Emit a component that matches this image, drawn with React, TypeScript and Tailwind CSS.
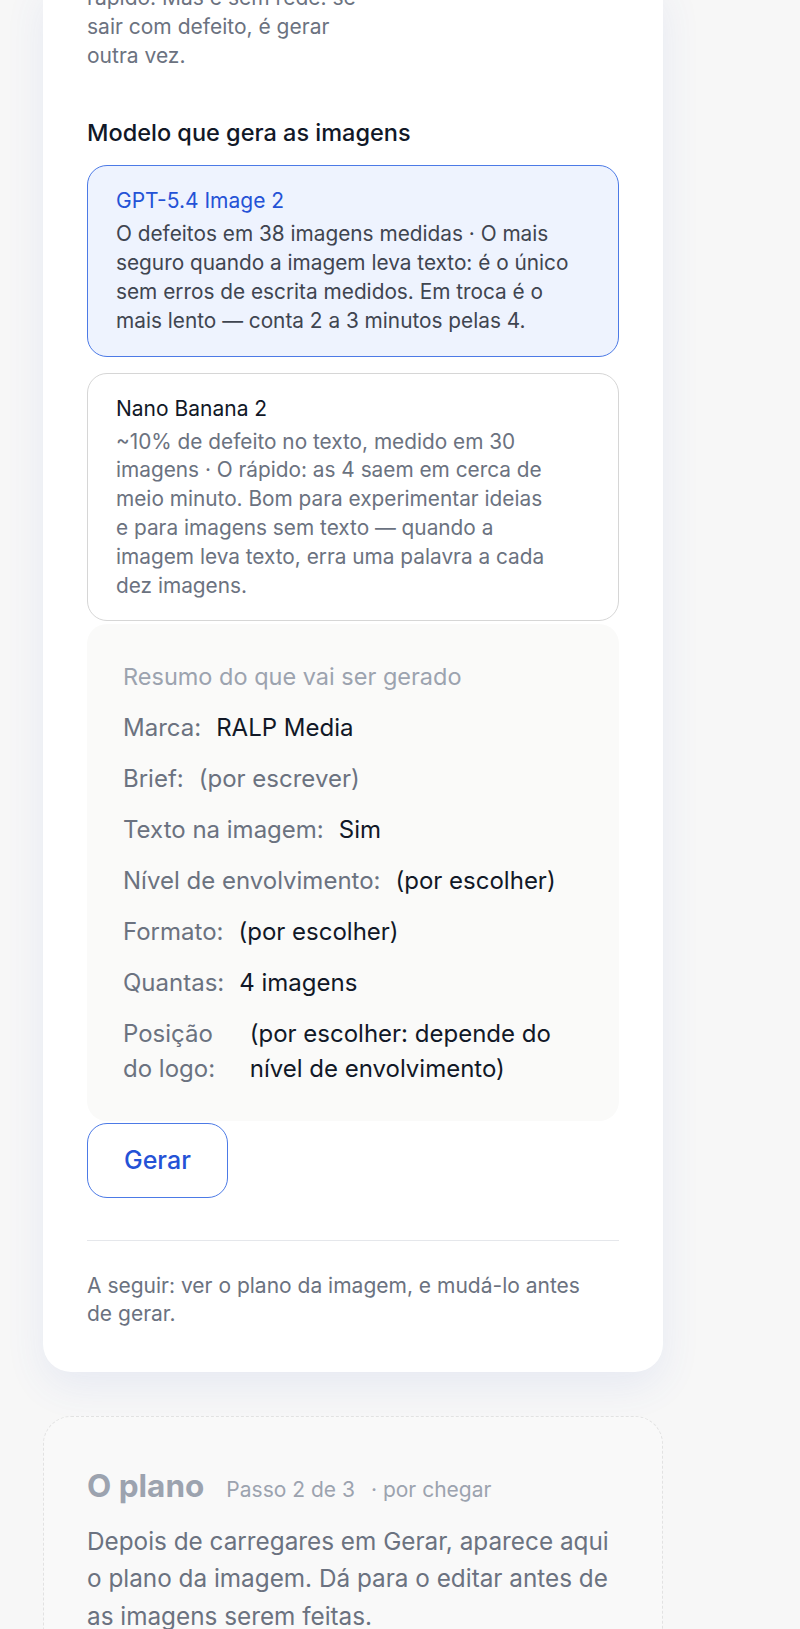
import React from 'react';

type ModelOption = {
  id: string;
  name: string;
  description: string;
};

const MODELS: ModelOption[] = [
  {
    id: 'gpt-image',
    name: 'GPT-5.4 Image 2',
    description:
      'O defeitos em 38 imagens medidas · O mais seguro quando a imagem leva texto: é o único sem erros de escrita medidos. Em troca é o mais lento — conta 2 a 3 minutos pelas 4.',
  },
  {
    id: 'nano-banana',
    name: 'Nano Banana 2',
    description:
      '~10% de defeito no texto, medido em 30 imagens · O rápido: as 4 saem em cerca de meio minuto. Bom para experimentar ideias e para imagens sem texto — quando a imagem leva texto, erra uma palavra a cada dez imagens.',
  },
];

const SUMMARY = [
  { label: 'Marca:', value: 'RALP Media', muted: false },
  { label: 'Brief:', value: '(por escrever)', muted: true },
  { label: 'Texto na imagem:', value: 'Sim', muted: false },
  { label: 'Nível de envolvimento:', value: '(por escolher)', muted: false },
  { label: 'Formato:', value: '(por escolher)', muted: false },
  { label: 'Quantas:', value: '4 imagens', muted: false },
  { label: 'Posição do logo:', value: '(por escolher: depende do nível de envolvimento)', muted: false },
];

const App: React.FC = () => {
  const [selected, setSelected] = React.useState('gpt-image');

  return (
    <div className="min-h-screen overflow-hidden bg-[#f7f7f7] font-['Inter','Noto_Sans',sans-serif] pb-10">
      {/* Step 1 card (scrolled, top is off screen) */}
      <div className="-mt-[16px] ml-[43px] w-[620px] rounded-b-[28px] bg-white px-[44px] pb-[44px] shadow-[0_14px_40px_rgba(70,95,200,0.09)]">
        <p className="max-w-[278px] text-pretty text-[21px] leading-[28.8px] text-[#6b7280]">
          rápido. Mas é sem rede. se sair com defeito, é gerar outra vez.
        </p>

        <h3 className="mt-[48px] text-[23.5px] font-medium leading-[30px] text-[#111827]">
          Modelo que gera as imagens
        </h3>

        <div className="mt-[17px] flex flex-col gap-[16px]">
          {MODELS.map((m) => {
            const active = m.id === selected;
            return (
              <button
                key={m.id}
                type="button"
                onClick={() => setSelected(m.id)}
                className={`rounded-[20px] border-[1.5px] px-[28px] pb-[20px] pt-[20px] text-left ${
                  active ? 'border-[#4c7ae6] bg-[#eef3fe]' : 'border-[#d6d6d6] bg-white'
                }`}
              >
                <div
                  className={`text-[21px] leading-[29px] ${active ? 'text-[#2452d6]' : 'text-[#111827]'}`}
                >
                  {m.name}
                </div>
                <p
                  className={`mt-[5px] max-w-[457px] text-pretty text-[20.8px] leading-[28.8px] ${
                    active ? 'text-[#3f4550]' : 'text-[#6b7280]'
                  }`}
                >
                  {m.description}
                </p>
              </button>
            );
          })}
        </div>

        {/* Summary */}
        <div className="mt-[3px] rounded-[20px] bg-[#fafaf9] px-[36px] pb-[35px] pt-[36px]">
          <div className="text-[23.5px] leading-[34px] text-[#9ca3af]">Resumo do que vai ser gerado</div>
          <dl className="mt-[16px] flex flex-col gap-[16px]">
            {SUMMARY.map((row) => (
              <div key={row.label} className="flex gap-[15px] text-[24px] leading-[35px]">
                <dt className="text-[#6b7280]">{row.label}</dt>
                <dd className={row.muted ? 'text-[#6b7280]' : 'text-[#111827]'}>{row.value}</dd>
              </div>
            ))}
          </dl>
        </div>

        <button
          type="button"
          className="mt-[2px] rounded-[20px] border-[1.5px] border-[#4c7ae6] bg-white px-[36px] py-[19px] text-[25px] font-medium leading-[35px] text-[#2452d6]"
        >
          Gerar
        </button>

        <hr className="mt-[42px] border-t-[1.5px] border-[#e5e7eb]" />

        <p className="mt-[31px] max-w-[500px] text-pretty text-[21px] leading-[28px] text-[#6b7280]">
          A seguir: ver o plano da imagem, e mudá-lo antes de gerar.
        </p>
      </div>

      {/* Step 2 placeholder */}
      <div className="ml-[43px] mt-[44px] w-[620px] rounded-[28px] border-[1.5px] border-dashed border-[#e2e2e2] bg-[#f9f9f9] px-[43px] pb-[44px] pt-[50px]">
        <div className="flex items-baseline">
          <h2 className="mr-[22px] text-[31.5px] font-bold leading-[38px] text-[#9ca3af]">O plano</h2>
          <span className="mr-[16px] text-[21px] text-[#9ca3af]">Passo 2 de 3</span>
          <span className="text-[21px] text-[#9ca3af]">· por chegar</span>
        </div>
        <p className="mt-[17px] max-w-[532px] text-[24.3px] leading-[37.4px] text-[#6b7280]">
          Depois de carregares em Gerar, aparece aqui o plano da imagem. Dá para o editar antes de as
          imagens serem feitas.
        </p>
      </div>
    </div>
  );
};

export default App;
